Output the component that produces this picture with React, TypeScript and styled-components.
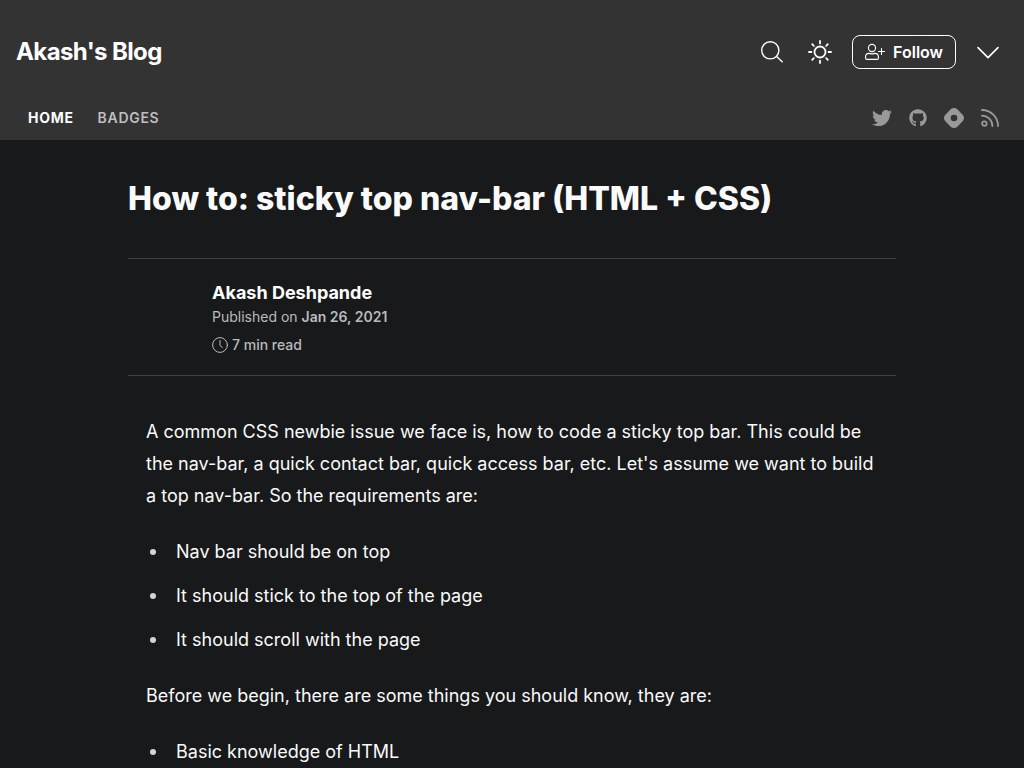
import React from "react";
import styled, { createGlobalStyle } from "styled-components";
import { FaTwitter, FaGithub } from "react-icons/fa";

const GlobalStyle = createGlobalStyle`
  *, *::before, *::after { box-sizing: border-box; }
  body {
    margin: 0;
    background: #18191a;
    color: #fafafa;
    font-family: Inter, "Liberation Sans", sans-serif;
  }
  h1, h2, p, ul { margin: 0; padding: 0; }
`;

const Header = styled.header`
  background: #333333;
`;

const TopBar = styled.div`
  display: flex;
  align-items: center;
  justify-content: space-between;
  height: 104px;
  padding: 0 16px;
`;

const BlogName = styled.a`
  color: #ffffff;
  font-size: 24px;
  font-weight: 700;
  line-height: 32px;
  letter-spacing: -0.025em;
  text-decoration: none;
`;

const Actions = styled.div`
  display: flex;
  align-items: center;
  gap: 8px;
`;

const IconButton = styled.button`
  display: flex;
  align-items: center;
  justify-content: center;
  width: 40px;
  height: 40px;
  padding: 0;
  border: 0;
  background: transparent;
  color: #ffffff;
  cursor: pointer;
`;

const FollowButton = styled.button`
  display: flex;
  align-items: center;
  gap: 8px;
  height: 34px;
  margin: 0 4px;
  padding: 0 12px;
  border: 1px solid #ffffff;
  border-radius: 8px;
  background: transparent;
  color: #ffffff;
  font-family: inherit;
  font-size: 16px;
  font-weight: 600;
  cursor: pointer;
`;

const NavBar = styled.div`
  display: flex;
  justify-content: space-between;
  align-items: center;
  height: 36px;
  padding: 0 16px;
  padding-bottom: 8px;
`;

const NavLinks = styled.nav`
  display: flex;
`;

const NavLink = styled.a<{ $active?: boolean }>`
  padding: 0 12px;
  color: ${(p) => (p.$active ? "#ffffff" : "#bfbfbf")};
  font-size: 14px;
  font-weight: ${(p) => (p.$active ? 700 : 600)};
  line-height: 24px;
  letter-spacing: 0.05em;
  text-decoration: none;
`;

const SocialLinks = styled.div`
  display: flex;
`;

const SocialLink = styled.a`
  display: flex;
  align-items: center;
  justify-content: center;
  width: 36px;
  height: 28px;
  color: #999999;
`;

const Article = styled.article`
  max-width: 768px;
  margin: 0 auto;
`;

const Title = styled.h1`
  padding: 36px 0;
  color: #fafafa;
  font-size: 32px;
  font-weight: 800;
  line-height: 46px;
`;

const Byline = styled.section`
  display: flex;
  gap: 20px;
  padding: 20px 0;
  border: solid #404244;
  border-width: 1px 0;
`;

const Avatar = styled.div`
  width: 64px;
  height: 64px;
  border-radius: 50%;
`;

const AuthorName = styled.h2`
  color: #ffffff;
  font-size: 18px;
  font-weight: 700;
  line-height: 28px;
`;

const Meta = styled.p`
  display: flex;
  align-items: center;
  gap: 4px;
  color: #b8bbbf;
  font-size: 14px;
  line-height: 20px;

  & + & { margin-top: 8px; }
  strong { font-weight: 600; }
  span { font-weight: 500; }
`;

const Content = styled.div`
  padding: 40px 18px 0;
  color: #fafafa;
  font-size: 18px;
  line-height: 32px;
`;

const Paragraph = styled.p`
  margin-bottom: 24px;
`;

const List = styled.ul`
  padding-left: 30px;
  list-style: none;

  & + p { margin-top: 24px; }
`;

const Item = styled.li`
  position: relative;

  & + & { margin-top: 12px; }

  &::before {
    content: "";
    position: absolute;
    top: 13px;
    left: -26px;
    width: 6px;
    height: 6px;
    border-radius: 50%;
    background: #d4d4d8;
  }
`;

const line = { fill: "none", stroke: "currentColor", "aria-hidden": true } as const;

const SearchIcon = () => (
  <svg {...line} width="24" height="24" viewBox="0 0 24 24" strokeWidth="1.4" strokeLinecap="round">
    <circle cx="10.3" cy="10.3" r="8.6" />
    <path d="M16.6 16.6L22.2 21.8" />
  </svg>
);

const SunIcon = () => (
  <svg {...line} width="24" height="24" viewBox="0 0 24 24" strokeWidth="1.8" strokeLinecap="round">
    <circle cx="12" cy="12" r="5.5" />
    <path d="M12 1v2.4M12 20.6v2.4M1 12h2.4M20.6 12h2.4M4.2 4.2l1.6 1.6M18.2 18.2l1.6 1.6M4.2 19.8l1.6-1.6M18.2 5.8l1.6-1.6" />
  </svg>
);

const ChevronIcon = () => (
  <svg {...line} width="24" height="24" viewBox="0 0 24 24" strokeWidth="1.6" strokeLinecap="round" strokeLinejoin="round">
    <path d="M2 7.6l10 10 10-10" />
  </svg>
);

const UserPlusIcon = () => (
  <svg {...line} width="20" height="20" viewBox="0 0 20 20" strokeWidth="1.1" strokeLinecap="round">
    <circle cx="7" cy="6" r="3.6" />
    <path d="M4 11.4C2 11.4.6 12.8.6 14.8v1.4c0 .7.5 1.2 1.2 1.2h10.4c.7 0 1.2-.5 1.2-1.2v-1.4c0-2-1.4-3.4-3.4-3.4-.9 0-1.5.5-3 .5s-2.1-.5-3-.5z" />
    <path d="M16.5 6.5v6M13.5 9.5h6" />
  </svg>
);

const ClockIcon = () => (
  <svg {...line} width="16" height="16" viewBox="0 0 16 16" strokeWidth="1" strokeLinecap="round">
    <circle cx="8" cy="8" r="7.4" />
    <path d="M8 3.5v5l2.4 2" />
  </svg>
);

const HashnodeIcon = () => (
  <svg width="20" height="20" viewBox="0 0 24 24" fill="currentColor" aria-hidden>
    <path d="M22.351 8.019l-6.37-6.37a5.63 5.63 0 0 0-7.962 0l-6.37 6.37a5.63 5.63 0 0 0 0 7.962l6.37 6.37a5.63 5.63 0 0 0 7.962 0l6.37-6.37a5.63 5.63 0 0 0 0-7.962zM12 15.953a3.953 3.953 0 1 1 0-7.906 3.953 3.953 0 0 1 0 7.906z" />
  </svg>
);

const RssIcon = () => (
  <svg {...line} width="18" height="18" viewBox="0 0 18 18" strokeWidth="1.8" strokeLinecap="round">
    <circle cx="3.4" cy="14.6" r="2.3" />
    <path d="M.9 6.6c5.8 0 10.5 4.7 10.5 10.5M.9 1c8.9 0 16.1 7.2 16.1 16.1" />
  </svg>
);

const requirements = [
  "Nav bar should be on top",
  "It should stick to the top of the page",
  "It should scroll with the page",
];

export default function App() {
  return (
    <>
      <GlobalStyle />
      <Header>
        <TopBar>
          <BlogName href="#">Akash's Blog</BlogName>
          <Actions>
            <IconButton aria-label="Search"><SearchIcon /></IconButton>
            <IconButton aria-label="Toggle theme"><SunIcon /></IconButton>
            <FollowButton><UserPlusIcon />Follow</FollowButton>
            <IconButton aria-label="More"><ChevronIcon /></IconButton>
          </Actions>
        </TopBar>
        <NavBar>
          <NavLinks>
            <NavLink href="#" $active>HOME</NavLink>
            <NavLink href="#">BADGES</NavLink>
          </NavLinks>
          <SocialLinks>
            <SocialLink href="#" aria-label="Twitter"><FaTwitter size={20} /></SocialLink>
            <SocialLink href="#" aria-label="GitHub"><FaGithub size={18} /></SocialLink>
            <SocialLink href="#" aria-label="Hashnode"><HashnodeIcon /></SocialLink>
            <SocialLink href="#" aria-label="RSS"><RssIcon /></SocialLink>
          </SocialLinks>
        </NavBar>
      </Header>
      <Article>
        <Title>How to: sticky top nav-bar (HTML + CSS)</Title>
        <Byline>
          <Avatar />
          <div>
            <AuthorName>Akash Deshpande</AuthorName>
            <Meta>Published on <strong>Jan 26, 2021</strong></Meta>
            <Meta><ClockIcon /><span>7 min read</span></Meta>
          </div>
        </Byline>
        <Content>
          <Paragraph>
            A common CSS newbie issue we face is, how to code a sticky top bar. This could be the
            nav-bar, a quick contact bar, quick access bar, etc. Let's assume we want to build a top
            nav-bar. So the requirements are:
          </Paragraph>
          <List>
            {requirements.map((text) => <Item key={text}>{text}</Item>)}
          </List>
          <Paragraph>Before we begin, there are some things you should know, they are:</Paragraph>
          <List>
            <Item>Basic knowledge of HTML</Item>
          </List>
        </Content>
      </Article>
    </>
  );
}
